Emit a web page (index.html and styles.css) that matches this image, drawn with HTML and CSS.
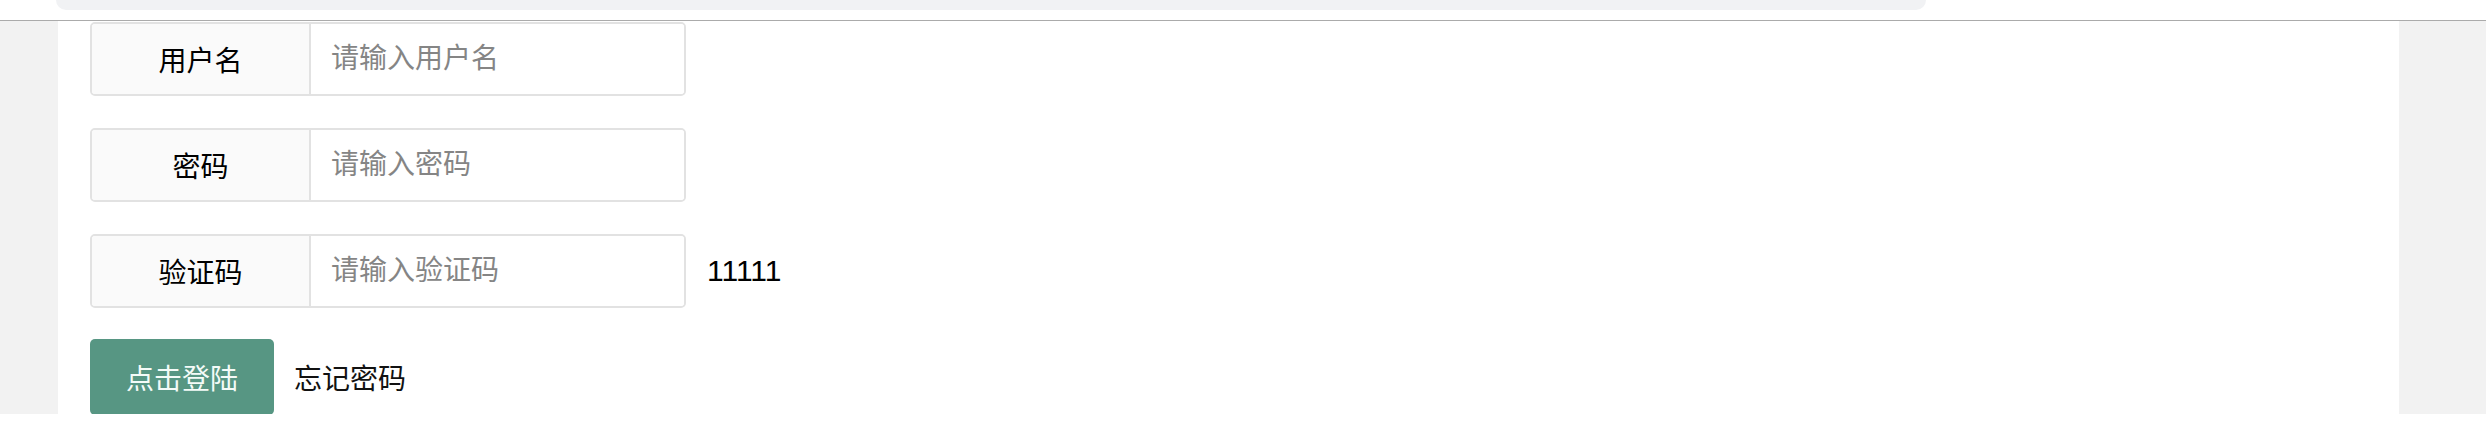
FILE: index.html
```html
<!DOCTYPE html>
<html lang="zh-CN">
<head>
    <meta charset="UTF-8">
    <title>登陆</title>
    <link rel="stylesheet" href="styles.css">
</head>
<body>
    <div class="topbar">
        <div class="tab-strip"></div>
    </div>

    <div class="page">
        <div class="main">
            <form class="login-form">
                <div class="form-row">
                    <div class="input-group">
                        <span class="addon">用户名</span>
                        <input class="field" type="text" placeholder="请输入用户名">
                    </div>
                </div>
                <div class="form-row">
                    <div class="input-group">
                        <span class="addon">密码</span>
                        <input class="field" type="password" placeholder="请输入密码">
                    </div>
                </div>
                <div class="form-row">
                    <div class="input-group">
                        <span class="addon">验证码</span>
                        <input class="field" type="text" placeholder="请输入验证码">
                    </div>
                    <span class="captcha">11111</span>
                </div>
                <div class="form-row actions">
                    <button class="btn-login" type="button">点击登陆</button>
                    <a class="forgot" href="#">忘记密码</a>
                </div>
            </form>
        </div>
    </div>
</body>
</html>
```

FILE: styles.css
```css
/* Base */
body {
    margin: 0;
    background-color: #ffffff;
    font-family: "Liberation Sans", "Noto Sans CJK SC", sans-serif;
    font-size: 28px;
    color: #000000;
}

/* Browser tab strip at the top */
.topbar {
    height: 20px;
    border-bottom: 1px solid #ababab;
    background-color: #ffffff;
}

.tab-strip {
    margin-left: 56px;
    width: 1870px;
    height: 10px;
    background-color: #f1f2f4;
    border-radius: 0 0 14px 14px;
}

/* Page with grey side gutters */
.page {
    background-color: #f2f2f2;
    padding: 0 87px 0 58px;
    height: 393px;
}

.main {
    background-color: #ffffff;
    height: 100%;
    padding: 1px 32px 0;
    box-sizing: border-box;
}

.login-form {
    display: flex;
    flex-direction: column;
    gap: 32px;
    margin: 0;
}

.form-row {
    display: flex;
    align-items: center;
    gap: 21px;
}

.form-row.actions {
    margin-top: -1px;
}

/* Input group: label + field */
.input-group {
    display: flex;
    width: 596px;
    height: 74px;
    box-sizing: border-box;
    border: 2px solid #e2e2e2;
    border-radius: 5px;
    overflow: hidden;
}

.addon {
    width: 217px;
    flex-shrink: 0;
    display: flex;
    align-items: center;
    justify-content: center;
    background-color: #fafafa;
    border-right: 2px solid #e2e2e2;
    color: #000000;
}

.field {
    flex: 1;
    min-width: 0;
    border: none;
    outline: none;
    padding: 0 20px;
    font-family: inherit;
    font-size: 28px;
    color: #333333;
    background-color: #ffffff;
}

.field::placeholder {
    color: #858585;
}

.captcha {
    font-size: 30px;
    color: #000000;
}

/* Buttons */
.btn-login {
    width: 184px;
    height: 76px;
    border: none;
    border-radius: 5px;
    background-color: #579683;
    color: #f4fbf8;
    font-family: inherit;
    font-size: 28px;
    padding: 0;
}

.forgot {
    color: #111111;
    text-decoration: none;
    margin-left: -1px;
}
```
